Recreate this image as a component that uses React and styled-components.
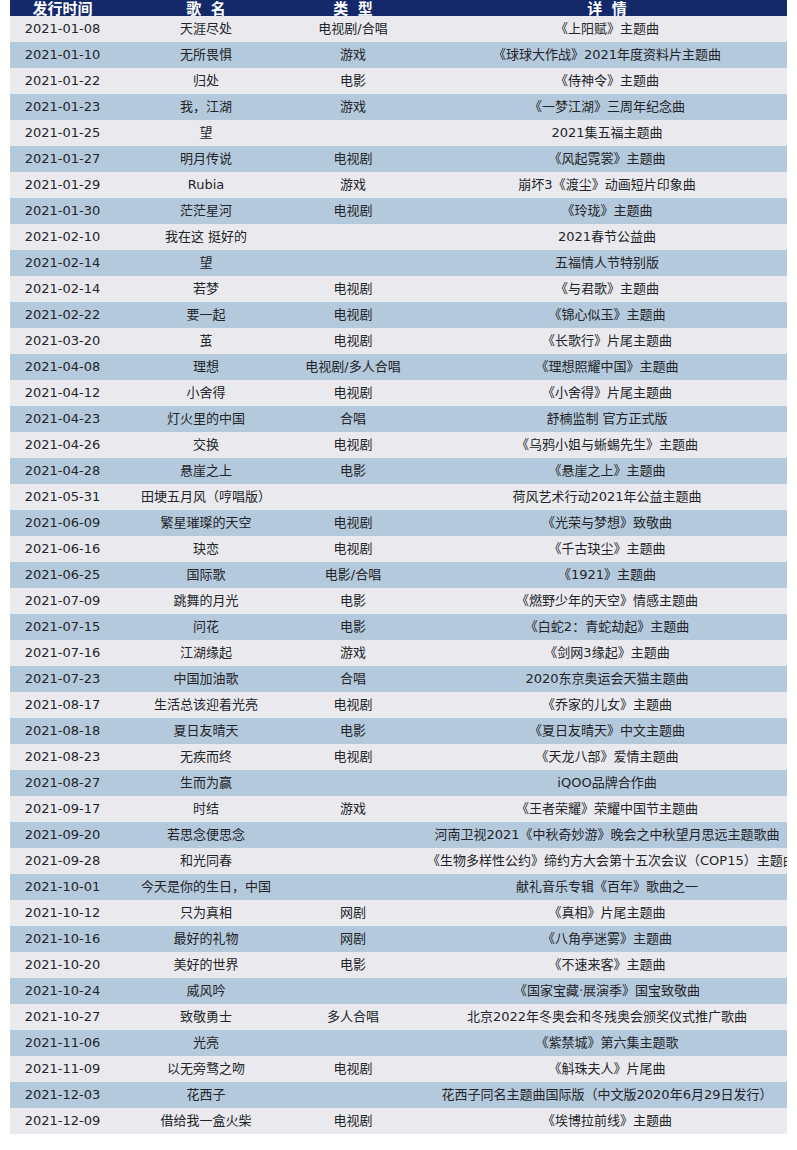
import React from "react";
import styled, { createGlobalStyle } from "styled-components";

const GlobalStyle = createGlobalStyle`
  html, body { margin: 0; padding: 0; background: #ffffff; }
  body { font-family: "DejaVu Sans", "Noto Sans CJK SC", sans-serif; }
`;

const Page = styled.div`
  width: 797px;
  height: 1150px;
  padding: 0 10px;
  box-sizing: border-box;
  background: #ffffff;
`;

const Table = styled.div`
  width: 777px;
  overflow: hidden;
  display: flex;
  flex-direction: column;
`;

const cols = "105px 182px 112px 1fr";

const HeaderRow = styled.div`
  display: grid;
  grid-template-columns: ${cols};
  height: 16px;
  overflow: hidden;
  background: #13296a;
`;

const HeaderCell = styled.div`
  display: flex;
  align-items: flex-end;
  justify-content: center;
  padding-left: ${(p) => p.$pad || 0}px;
`;

const HeaderText = styled.span`
  font-family: "Noto Sans CJK SC", sans-serif;
  font-weight: 700;
  font-size: 15px;
  line-height: 15px;
  color: #ffffff;
  white-space: pre;
  word-spacing: 6px;
  margin-bottom: 9px;
`;

const Row = styled.div`
  display: grid;
  grid-template-columns: ${cols};
  height: 26px;
  align-items: center;
  background: ${(p) => (p.$alt ? "#b5c9dc" : "#eaeaee")};
  color: #222428;
  font-size: 13px;
`;

const Cell = styled.div`
  text-align: center;
  white-space: nowrap;
  line-height: 26px;
  padding-left: ${(p) => p.$pad || 0}px;
  min-width: 0;
`;

const data = [
  ["2021-01-08", "天涯尽处", "电视剧/合唱", "《上阳赋》主题曲"],
  ["2021-01-10", "无所畏惧", "游戏", "《球球大作战》2021年度资料片主题曲"],
  ["2021-01-22", "归处", "电影", "《侍神令》主题曲"],
  ["2021-01-23", "我，江湖", "游戏", "《一梦江湖》三周年纪念曲"],
  ["2021-01-25", "望", "", "2021集五福主题曲"],
  ["2021-01-27", "明月传说", "电视剧", "《风起霓裳》主题曲"],
  ["2021-01-29", "Rubia", "游戏", "崩坏3《渡尘》动画短片印象曲"],
  ["2021-01-30", "茫茫星河", "电视剧", "《玲珑》主题曲"],
  ["2021-02-10", "我在这 挺好的", "", "2021春节公益曲"],
  ["2021-02-14", "望", "", "五福情人节特别版"],
  ["2021-02-14", "若梦", "电视剧", "《与君歌》主题曲"],
  ["2021-02-22", "要一起", "电视剧", "《锦心似玉》主题曲"],
  ["2021-03-20", "茧", "电视剧", "《长歌行》片尾主题曲"],
  ["2021-04-08", "理想", "电视剧/多人合唱", "《理想照耀中国》主题曲"],
  ["2021-04-12", "小舍得", "电视剧", "《小舍得》片尾主题曲"],
  ["2021-04-23", "灯火里的中国", "合唱", "舒楠监制 官方正式版"],
  ["2021-04-26", "交换", "电视剧", "《乌鸦小姐与蜥蜴先生》主题曲"],
  ["2021-04-28", "悬崖之上", "电影", "《悬崖之上》主题曲"],
  ["2021-05-31", "田埂五月风（哼唱版）", "", "荷风艺术行动2021年公益主题曲"],
  ["2021-06-09", "繁星璀璨的天空", "电视剧", "《光荣与梦想》致敬曲"],
  ["2021-06-16", "玦恋", "电视剧", "《千古玦尘》主题曲"],
  ["2021-06-25", "国际歌", "电影/合唱", "《1921》主题曲"],
  ["2021-07-09", "跳舞的月光", "电影", "《燃野少年的天空》情感主题曲"],
  ["2021-07-15", "问花", "电影", "《白蛇2：青蛇劫起》主题曲"],
  ["2021-07-16", "江湖缘起", "游戏", "《剑网3缘起》主题曲"],
  ["2021-07-23", "中国加油歌", "合唱", "2020东京奥运会天猫主题曲"],
  ["2021-08-17", "生活总该迎着光亮", "电视剧", "《乔家的儿女》主题曲"],
  ["2021-08-18", "夏日友晴天", "电影", "《夏日友晴天》中文主题曲"],
  ["2021-08-23", "无疾而终", "电视剧", "《天龙八部》爱情主题曲"],
  ["2021-08-27", "生而为赢", "", "iQOO品牌合作曲"],
  ["2021-09-17", "时结", "游戏", "《王者荣耀》荣耀中国节主题曲"],
  ["2021-09-20", "若思念便思念", "", "河南卫视2021《中秋奇妙游》晚会之中秋望月思远主题歌曲"],
  ["2021-09-28", "和光同春", "", "《生物多样性公约》缔约方大会第十五次会议（COP15）主题曲"],
  ["2021-10-01", "今天是你的生日，中国", "", "献礼音乐专辑《百年》歌曲之一"],
  ["2021-10-12", "只为真相", "网剧", "《真相》片尾主题曲"],
  ["2021-10-16", "最好的礼物", "网剧", "《八角亭迷雾》主题曲"],
  ["2021-10-20", "美好的世界", "电影", "《不速来客》主题曲"],
  ["2021-10-24", "威风吟", "", "《国家宝藏·展演季》国宝致敬曲"],
  ["2021-10-27", "致敬勇士", "多人合唱", "北京2022年冬奥会和冬残奥会颁奖仪式推广歌曲"],
  ["2021-11-06", "光亮", "", "《紫禁城》第六集主题歌"],
  ["2021-11-09", "以无旁骛之吻", "电视剧", "《斛珠夫人》片尾曲"],
  ["2021-12-03", "花西子", "", "花西子同名主题曲国际版（中文版2020年6月29日发行）"],
  ["2021-12-09", "借给我一盒火柴", "电视剧", "《埃博拉前线》主题曲"],
];

export default function App() {
  return (
    <>
      <GlobalStyle />
      <Page>
        <Table>
          <HeaderRow>
            <HeaderCell><HeaderText>发行时间</HeaderText></HeaderCell>
            <HeaderCell><HeaderText>歌 名</HeaderText></HeaderCell>
            <HeaderCell><HeaderText>类 型</HeaderText></HeaderCell>
            <HeaderCell $pad={18}><HeaderText>详 情</HeaderText></HeaderCell>
          </HeaderRow>
          {data.map((r, i) => (
            <Row key={i} $alt={i % 2 === 1}>
              <Cell>{r[0]}</Cell>
              <Cell>{r[1]}</Cell>
              <Cell>{r[2]}</Cell>
              <Cell $pad={18}>{r[3]}</Cell>
            </Row>
          ))}
        </Table>
      </Page>
    </>
  );
}
